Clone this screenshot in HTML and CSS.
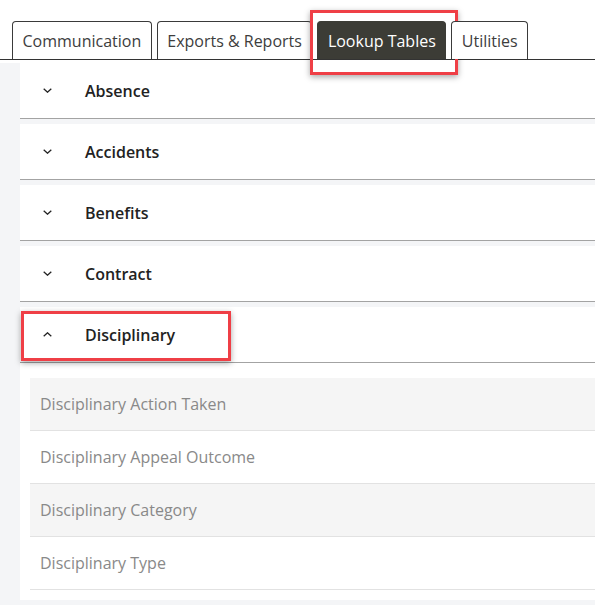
FILE: index.html
```html
<!DOCTYPE html>
<html lang="en">
<head>
<meta charset="utf-8">
<title>Lookup Tables</title>
<link rel="stylesheet" href="styles.css">
</head>
<body>
<nav class="tabs">
  <div class="tab">Communication</div>
  <div class="tab">Exports &amp; Reports</div>
  <div class="tab tab-active">Lookup Tables<span class="highlight highlight-tab"></span></div>
  <div class="tab">Utilities</div>
</nav>
<main class="content">
  <section class="acc-item acc-first">
    <div class="acc-header">
      <svg class="chev" width="9" height="5" viewBox="0 0 9 5"><path d="M0.7 0.7 L4.5 4.2 L8.3 0.7" fill="none" stroke="#222" stroke-width="1.3"/></svg>
      <span class="acc-title">Absence</span>
    </div>
  </section>
  <section class="acc-item">
    <div class="acc-header">
      <svg class="chev" width="9" height="5" viewBox="0 0 9 5"><path d="M0.7 0.7 L4.5 4.2 L8.3 0.7" fill="none" stroke="#222" stroke-width="1.3"/></svg>
      <span class="acc-title">Accidents</span>
    </div>
  </section>
  <section class="acc-item">
    <div class="acc-header">
      <svg class="chev" width="9" height="5" viewBox="0 0 9 5"><path d="M0.7 0.7 L4.5 4.2 L8.3 0.7" fill="none" stroke="#222" stroke-width="1.3"/></svg>
      <span class="acc-title">Benefits</span>
    </div>
  </section>
  <section class="acc-item">
    <div class="acc-header">
      <svg class="chev" width="9" height="5" viewBox="0 0 9 5"><path d="M0.7 0.7 L4.5 4.2 L8.3 0.7" fill="none" stroke="#222" stroke-width="1.3"/></svg>
      <span class="acc-title">Contract</span>
    </div>
  </section>
  <section class="acc-item acc-open">
    <div class="acc-header">
      <svg class="chev" width="9" height="5" viewBox="0 0 9 5"><path d="M0.7 4.3 L4.5 0.8 L8.3 4.3" fill="none" stroke="#222" stroke-width="1.3"/></svg>
      <span class="acc-title">Disciplinary</span>
      <span class="highlight highlight-head"></span>
    </div>
    <div class="acc-body">
      <ul class="sub-list">
        <li class="sub-item">Disciplinary Action Taken</li>
        <li class="sub-item">Disciplinary Appeal Outcome</li>
        <li class="sub-item">Disciplinary Category</li>
        <li class="sub-item">Disciplinary Type</li>
      </ul>
    </div>
  </section>
</main>
</body>
</html>
```

FILE: styles.css
```css
html, body {
  margin: 0;
  padding: 0;
  background: #ffffff;
  font-family: "Open Sans", "Liberation Sans", sans-serif;
  font-size: 16px;
}

.tabs {
  display: flex;
  gap: 5px;
  padding: 21px 0 0 12px;
  border-bottom: 1px solid #333333;
}

.tab {
  position: relative;
  height: 37px;
  line-height: 38px;
  padding: 0 9.5px;
  border: 1px solid #3a3a3a;
  border-bottom: none;
  border-radius: 4px 4px 0 0;
  color: #3d3d3d;
  background: #ffffff;
  white-space: nowrap;
}

.tab-active {
  background: #3c3c36;
  border-color: #3c3c36;
  color: #ffffff;
}

.highlight {
  position: absolute;
  border: 3px solid #ef3f46;
  box-shadow: 0 2px 6px rgba(0, 0, 0, 0.35);
  pointer-events: none;
  box-sizing: border-box;
}

.highlight-tab {
  left: -8px;
  top: -12px;
  width: 148px;
  height: 65px;
}

.content {
  background: #f4f5f7;
  padding: 0 0 6px 20px;
}

.acc-item {
  background: #ffffff;
  margin-top: 5px;
}

.acc-first {
  margin-top: 3px;
}

.acc-header {
  position: relative;
  display: flex;
  align-items: center;
  height: 55px;
  padding-left: 23px;
  border-bottom: 1px solid #a3a3a3;
}

.chev {
  display: block;
  flex: none;
}

.acc-title {
  margin-left: 33px;
  font-weight: 600;
  color: #222222;
}

.highlight-head {
  left: 1px;
  top: 4px;
  width: 210px;
  height: 50px;
}

.acc-body {
  padding: 15px 0 10px 10px;
}

.sub-list {
  list-style: none;
  margin: 0;
  padding: 0;
}

.sub-item {
  height: 52px;
  line-height: 52px;
  padding-left: 10px;
  border-bottom: 1px solid #e2e2e2;
  color: #898989;
}

.sub-item:nth-child(odd) {
  background: #f5f5f5;
}
```
